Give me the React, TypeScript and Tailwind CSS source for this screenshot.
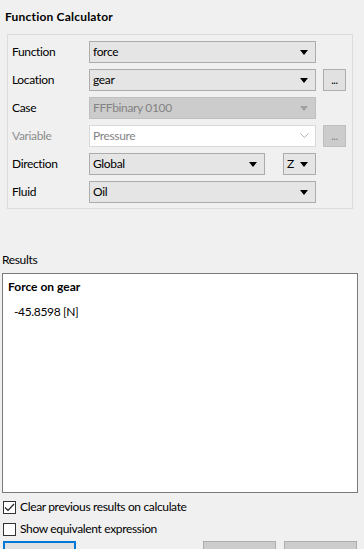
import type { ReactNode } from 'react';

function Arrow({ disabled }: { disabled?: boolean }) {
  return (
    <svg width="8" height="5" viewBox="0 0 8 5" className="shrink-0">
      <path d="M0 0 H8 L4 5 Z" fill={disabled ? '#a0a0a0' : '#000'} />
    </svg>
  );
}

function Combo({ value, width, disabled }: { value: string; width: string; disabled?: boolean }) {
  return (
    <div
      className={`${width} h-[22px] flex items-center justify-between pl-[3px] pr-[7px] border ${
        disabled ? 'bg-[#cccccc] border-[#bfbfbf] text-[#838383]' : 'bg-[#e5e5e5] border-[#acacac] text-black'
      }`}
    >
      <span className="leading-none">{value}</span>
      <Arrow disabled={disabled} />
    </div>
  );
}

function EditCombo({ value }: { value: string }) {
  return (
    <div className="w-[227px] h-[22px] flex items-center justify-between pl-[3px] pr-[6px] border border-[#d9d9d9] bg-white text-[#838383]">
      <span className="leading-none">{value}</span>
      <svg width="9" height="6" viewBox="0 0 9 6" className="shrink-0">
        <path d="M0.5 0.5 L4.5 4.5 L8.5 0.5" fill="none" stroke="#b0b0b0" strokeWidth="1" />
      </svg>
    </div>
  );
}

function Dots({ disabled }: { disabled?: boolean }) {
  return (
    <div
      className={`w-[23px] h-[22px] flex items-end justify-center pb-[5px] border text-[11px] leading-none ${
        disabled ? 'bg-[#cccccc] border-[#bfbfbf] text-[#838383]' : 'bg-[#e1e1e1] border-[#adadad] text-black'
      }`}
    >
      ...
    </div>
  );
}

function Row({ label, dim, children }: { label: string; dim?: boolean; children: ReactNode }) {
  return (
    <div className="flex items-center h-[22px]">
      <div className={`w-[81px] pl-[4px] ${dim ? 'text-[#8d8d8d]' : 'text-black'}`}>{label}</div>
      <div className="flex items-center gap-[7px]">{children}</div>
    </div>
  );
}

function Check({ checked, label }: { checked?: boolean; label: string }) {
  return (
    <div className="flex items-center h-[22px] pl-[3px] gap-[4px]">
      <div className="w-[13px] h-[13px] border border-[#333] bg-white flex items-center justify-center">
        {checked && (
          <svg width="11" height="9" viewBox="0 0 11 9">
            <path d="M1 4.5 L4 7.5 L10 1" fill="none" stroke="#222" strokeWidth="1.2" />
          </svg>
        )}
      </div>
      <span>{label}</span>
    </div>
  );
}

export default function App() {
  return (
    <div
      className="w-[364px] h-[549px] bg-[#f0f0f0] overflow-hidden text-[12px] text-black tracking-[-0.35px]"
      style={{ fontFamily: 'Lato, "Noto Sans", sans-serif' }}
    >
      <div className="pt-[8px] pl-[5px] h-[34px] font-bold leading-[18px] tracking-[0.2px]">Function Calculator</div>

      <div className="ml-[7px] w-[346px] border border-[#dcdcdc] pt-[6px] pb-[5px] flex flex-col gap-[6px]">
        <Row label="Function">
          <Combo value="force" width="w-[227px]" />
        </Row>
        <Row label="Location">
          <Combo value="gear" width="w-[227px]" />
          <Dots />
        </Row>
        <Row label="Case">
          <Combo value="FFFbinary 0100" width="w-[227px]" disabled />
        </Row>
        <Row label="Variable" dim>
          <EditCombo value="Pressure" />
          <Dots disabled />
        </Row>
        <Row label="Direction">
          <div className="flex items-center gap-[18px]">
            <Combo value="Global" width="w-[176px]" />
            <Combo value="Z" width="w-[33px]" />
          </div>
        </Row>
        <Row label="Fluid">
          <Combo value="Oil" width="w-[227px]" />
        </Row>
      </div>

      <div className="mt-[42px] pl-[2px] h-[22px] leading-[18px]">Results</div>
      <div className="ml-[2px] w-[356px] h-[220px] bg-white border border-[#7a7a7a] pt-[4px]">
        <div className="pl-[5px] font-bold leading-[18px] tracking-normal">Force on gear</div>
        <div className="pl-[11px] mt-[7px] leading-[18px]">-45.8598 [N]</div>
      </div>

      <div className="mt-[3px] flex flex-col">
        <Check checked label="Clear previous results on calculate" />
        <Check label="Show equivalent expression" />
      </div>

      <div className="mt-[1px] flex items-start">
        <div className="ml-[3px] w-[73px] h-[23px] border-2 border-[#0078d7] bg-[#e1e1e1]" />
        <div className="ml-[127px] w-[73px] h-[23px] border border-[#adadad] bg-[#cccccc]" />
        <div className="ml-[8px] w-[73px] h-[23px] border border-[#adadad] bg-[#cccccc]" />
      </div>
    </div>
  );
}
